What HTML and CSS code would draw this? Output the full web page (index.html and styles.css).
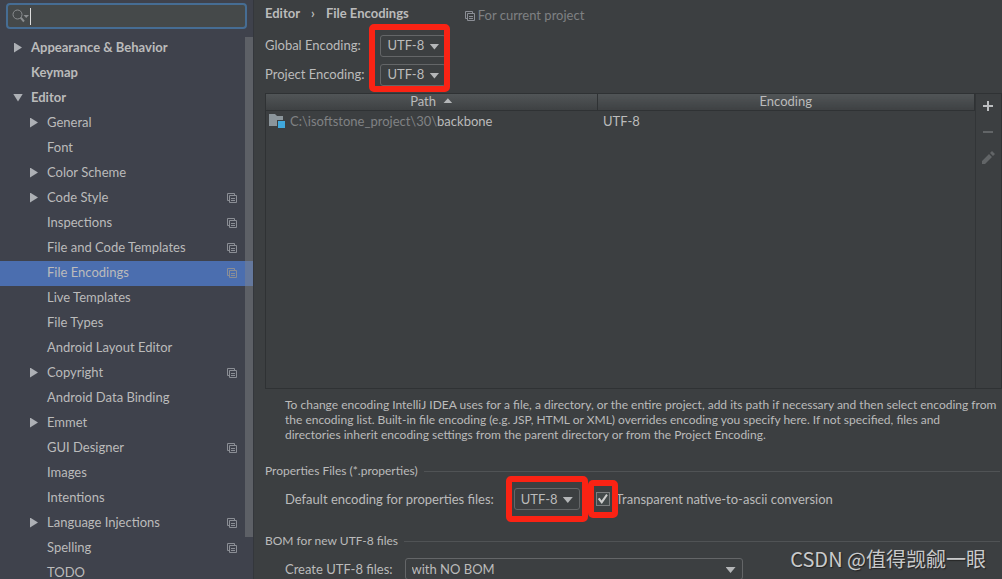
FILE: index.html
```html
<!DOCTYPE html>
<html lang="en">
<head>
    <meta charset="UTF-8">
    <meta name="viewport" content="width=device-width, initial-scale=1.0">
    <title>Settings</title>
    <link rel="stylesheet" href="styles.css">
</head>
<body>
    <!-- Shared icon: setting is stored per project -->
    <svg class="sprite" aria-hidden="true">
        <symbol id="icon-project" viewBox="0 0 10 10">
            <path d="M2.5 7.5H0.5V0.5H7.5V2.5M2.5 2.5H9.5V9.5H2.5ZM4 5.5H8M4 7.5H8" fill="none" stroke="currentColor" />
        </symbol>
    </svg>

    <div class="settings">
        <aside class="sidebar">
            <label class="search">
                <svg class="search-icon" width="18" height="14" viewBox="0 0 18 14" aria-hidden="true">
                    <circle cx="5.5" cy="5.5" r="4.5" fill="none" stroke="#8a8d8f" />
                    <path d="M8.7 8.7L12 12.5" stroke="#8a8d8f" stroke-width="2" />
                    <path d="M11.5 6H17L14.2 9Z" fill="#8a8d8f" />
                </svg>
                <span class="caret"></span>
                <input type="text" aria-label="Search settings">
            </label>

            <nav class="tree">
                <ul>
                    <li><a class="top closed" href="#">Appearance &amp; Behavior</a></li>
                    <li><a class="top" href="#">Keymap</a></li>
                    <li>
                        <a class="top open" href="#">Editor</a>
                        <ul>
                            <li><a class="closed" href="#">General</a></li>
                            <li><a href="#">Font</a></li>
                            <li><a class="closed" href="#">Color Scheme</a></li>
                            <li><a class="closed" href="#">Code Style <svg class="mark"><use href="#icon-project" /></svg></a></li>
                            <li><a href="#">Inspections <svg class="mark"><use href="#icon-project" /></svg></a></li>
                            <li><a href="#">File and Code Templates <svg class="mark"><use href="#icon-project" /></svg></a></li>
                            <li><a class="selected" href="#">File Encodings <svg class="mark"><use href="#icon-project" /></svg></a></li>
                            <li><a href="#">Live Templates</a></li>
                            <li><a href="#">File Types</a></li>
                            <li><a href="#">Android Layout Editor</a></li>
                            <li><a class="closed" href="#">Copyright <svg class="mark"><use href="#icon-project" /></svg></a></li>
                            <li><a href="#">Android Data Binding</a></li>
                            <li><a class="closed" href="#">Emmet</a></li>
                            <li><a href="#">GUI Designer <svg class="mark"><use href="#icon-project" /></svg></a></li>
                            <li><a href="#">Images</a></li>
                            <li><a href="#">Intentions</a></li>
                            <li><a class="closed" href="#">Language Injections <svg class="mark"><use href="#icon-project" /></svg></a></li>
                            <li><a href="#">Spelling <svg class="mark"><use href="#icon-project" /></svg></a></li>
                            <li><a href="#">TODO</a></li>
                        </ul>
                    </li>
                </ul>
                <div class="scroll-thumb"></div>
            </nav>
        </aside>

        <main class="content">
            <header class="breadcrumb">
                <h1>Editor <span class="sep">›</span> File Encodings</h1>
                <span class="scope"><svg class="mark"><use href="#icon-project" /></svg> For current project</span>
            </header>

            <div class="encodings">
                <label for="globalEncoding">Global Encoding:</label>
                <span class="select">
                    <select id="globalEncoding"><option>UTF-8</option></select>
                </span>
                <label for="projectEncoding">Project Encoding:</label>
                <span class="select">
                    <select id="projectEncoding"><option>UTF-8</option></select>
                </span>
                <div class="highlight"></div>
            </div>

            <div class="path-panel">
                <table>
                    <thead>
                        <tr>
                            <th class="path-col">Path <span class="sort"></span></th>
                            <th>Encoding</th>
                        </tr>
                    </thead>
                    <tbody>
                        <tr>
                            <td>
                                <div class="path">
                                    <svg width="16" height="14" viewBox="0 0 16 14" aria-hidden="true">
                                        <path d="M0 0H6L8 2H14V12H0Z" fill="#8b959b" />
                                        <path d="M8 6H16V14H8Z" fill="#3c3f41" />
                                        <path d="M9 7H16V14H9Z" fill="#40a8dc" />
                                    </svg>
                                    <span><span class="parent">C:\isoftstone_project\30\</span>backbone</span>
                                </div>
                            </td>
                            <td>UTF-8</td>
                        </tr>
                    </tbody>
                </table>
                <div class="toolbar">
                    <button type="button" aria-label="Add">
                        <svg width="14" height="14" viewBox="0 0 14 14"><path d="M7 2V12M2 7H12" stroke="#bcbec0" stroke-width="2" /></svg>
                    </button>
                    <button type="button" aria-label="Remove" disabled>
                        <svg width="14" height="14" viewBox="0 0 14 14"><path d="M2 7H12" stroke="#626567" stroke-width="2" /></svg>
                    </button>
                    <button type="button" aria-label="Edit" disabled>
                        <svg width="14" height="14" viewBox="0 0 14 14"><path d="M1 13V10L8 3L11 6L4 13ZM9 2L11 0L14 3L12 5Z" fill="#626567" /></svg>
                    </button>
                </div>
            </div>

            <p class="hint">To change encoding IntelliJ IDEA uses for a file, a directory, or the entire project, add its path if necessary and then select encoding from the encoding list. Built-in file encoding (e.g. JSP, HTML or XML) overrides encoding you specify here. If not specified, files and directories inherit encoding settings from the parent directory or from the Project Encoding.</p>

            <section>
                <h2>Properties Files (*.properties)</h2>
                <div class="row">
                    <label for="propertiesEncoding">Default encoding for properties files:</label>
                    <span class="select marked">
                        <select id="propertiesEncoding"><option>UTF-8</option></select>
                    </span>
                    <span class="check marked"><input type="checkbox" id="nativeToAscii" checked></span>
                    <label for="nativeToAscii">Transparent native-to-ascii conversion</label>
                </div>
            </section>

            <section>
                <h2>BOM for new UTF-8 files</h2>
                <div class="row">
                    <label for="bom">Create UTF-8 files:</label>
                    <span class="select wide">
                        <select id="bom"><option>with NO BOM</option></select>
                    </span>
                </div>
            </section>
        </main>

        <div class="watermark">CSDN @值得觊觎一眼</div>
    </div>
</body>
</html>
```

FILE: styles.css
```css
* {
    box-sizing: border-box;
}

body {
    margin: 0;
    font-family: Lato, "Open Sans", sans-serif;
    font-size: 13px;
    line-height: 19px;
    color: #bbbbbb;
    background-color: #3c3f41;
}

ul {
    list-style: none;
    margin: 0;
    padding: 0;
}

.sprite {
    display: none;
}

.settings {
    position: relative;
    display: flex;
    height: 100vh;
    overflow: hidden;
}

/* Sidebar */
.sidebar {
    flex: 0 0 254px;
    padding-top: 3px;
    background-color: #3f424c;
    border-right: 1px solid #34373c;
}

.search {
    display: flex;
    align-items: center;
    height: 26px;
    margin: 0 6px;
    padding-left: 4px;
    background-color: #45494a;
    border: 2px solid #466d94;
    border-radius: 4px;
}

.search-icon {
    flex: none;
}

.caret {
    flex: none;
    width: 1px;
    height: 17px;
    background-color: #dddddd;
}

.search input {
    flex: 1;
    min-width: 0;
    border: none;
    outline: none;
    background: none;
    color: inherit;
    font: inherit;
}

.tree {
    position: relative;
    padding-top: 7px;
}

.tree a {
    position: relative;
    display: flex;
    align-items: center;
    justify-content: space-between;
    height: 25px;
    padding: 0 16px 2px 47px;
    color: inherit;
    text-decoration: none;
}

.tree a.top {
    padding-left: 31px;
    font-weight: bold;
}

.tree a.selected {
    background-color: #4b6eaf;
}

/* Expand arrows sit in the indent of the row */
.tree a.closed::before,
.tree a.open::before {
    content: "";
    position: absolute;
    left: 30px;
    width: 8px;
    height: 10px;
    background-color: #adb0b5;
    clip-path: polygon(0 0, 100% 50%, 0 100%);
}

.tree a.top::before {
    left: 14px;
}

.tree a.open::before {
    left: 13px;
    width: 10px;
    height: 8px;
    clip-path: polygon(0 0, 100% 0, 50% 100%);
}

.mark {
    flex: none;
    width: 10px;
    height: 10px;
    color: #8b8e95;
}

.scroll-thumb {
    position: absolute;
    top: 8px;
    right: 0;
    width: 8px;
    height: 500px;
    background-color: rgba(130, 132, 135, 0.45);
}

/* Content */
.content {
    flex: 1;
    min-width: 0;
    padding: 3px 0 0 11px;
}

.breadcrumb {
    display: flex;
    align-items: center;
    height: 24px;
    gap: 56px;
    padding-bottom: 4px;
}

h1 {
    margin: 0;
    font-size: 13px;
    line-height: 19px;
}

.sep {
    margin: 0 8px;
}

.scope {
    display: flex;
    align-items: center;
    gap: 3px;
    padding-top: 5px;
    color: #7f8183;
}

.encodings {
    position: relative;
    display: grid;
    grid-template-columns: max-content max-content;
    grid-auto-rows: 29px;
    align-items: center;
    column-gap: 16px;
    padding: 4px 0;
}

.highlight {
    position: absolute;
    top: -3px;
    left: 104px;
    width: 81px;
    height: 68px;
    border: 6px solid #fa2314;
    border-radius: 5px;
    pointer-events: none;
}

.select {
    position: relative;
    display: flex;
}

.select::after {
    content: "";
    position: absolute;
    top: 9px;
    right: 7px;
    width: 10px;
    height: 6px;
    background-color: #b4b6b8;
    clip-path: polygon(0 0, 100% 0, 50% 100%);
    pointer-events: none;
}

select {
    appearance: none;
    width: 66px;
    height: 22px;
    padding: 0 6px;
    color: inherit;
    font: inherit;
    background-color: #3c3f41;
    border: 1px solid #646668;
    border-radius: 3px;
}

.path-panel {
    display: flex;
    align-items: flex-start;
    min-height: 296px;
    border: 1px solid #2f3234;
}

table {
    flex: 1;
    border-collapse: collapse;
    table-layout: fixed;
}

th {
    height: 16px;
    padding: 0;
    font-weight: normal;
    line-height: 15px;
    background: linear-gradient(#515557, #3e4143);
    border-right: 1px solid #2f3234;
    border-bottom: 1px solid #2f3234;
}

.path-col {
    width: 331px;
}

td {
    height: 22px;
    padding: 0 6px;
}

td:first-child {
    padding: 0 3px;
}

.sort {
    display: inline-block;
    width: 9px;
    height: 5px;
    margin: 0 0 3px 4px;
    background-color: #b4b6b8;
    clip-path: polygon(50% 0, 100% 100%, 0 100%);
}

.path {
    display: flex;
    align-items: center;
    gap: 5px;
}

.parent {
    color: #808284;
}

.toolbar {
    display: flex;
    flex-direction: column;
    align-self: stretch;
    width: 26px;
    border-left: 1px solid #323537;
}

.toolbar button {
    display: flex;
    align-items: center;
    justify-content: center;
    height: 26px;
    padding: 0 2px 2px 0;
    border: none;
    background: none;
}

.hint {
    margin: 8px 0 0;
    padding: 0 4px 3px 20px;
    font-size: 12px;
    line-height: 15px;
}

h2 {
    display: flex;
    align-items: center;
    gap: 6px;
    margin: 17px 2px 0 0;
    font-size: 12px;
    font-weight: normal;
    line-height: 18px;
}

h2::after {
    content: "";
    flex: 1;
    height: 1px;
    background-color: #505355;
}

.row {
    display: flex;
    align-items: center;
    height: 32px;
    padding-left: 20px;
    margin-top: 3px;
}

.row .select {
    margin-left: 20px;
}

.row .wide {
    flex: 0 1 338px;
    margin-left: 12px;
}

.wide select {
    width: 100%;
}

.check {
    position: relative;
    display: flex;
    margin: 0 6px 0 16px;
}

input[type="checkbox"] {
    appearance: none;
    position: relative;
    width: 14px;
    height: 14px;
    margin: 0;
    background-color: #43494a;
    border: 1px solid #7b7d7f;
}

input[type="checkbox"]:checked::before {
    content: "";
    position: absolute;
    inset: 1px;
    background-color: #cccccc;
    clip-path: polygon(0 50%, 18% 38%, 38% 65%, 84% 0, 100% 12%, 40% 100%);
}

/* Red frame drawn over a single control */
.marked::before {
    content: "";
    position: absolute;
    inset: -12px -8px;
    border: 6px solid #fa2314;
    border-radius: 5px;
    pointer-events: none;
    z-index: 1;
}

.watermark {
    position: absolute;
    right: 16px;
    bottom: 5px;
    color: #c9cacb;
    font-family: "Noto Sans CJK SC", sans-serif;
    font-size: 20px;
    line-height: 30px;
    text-shadow: 1px 1px 1px #222222;
}
```
